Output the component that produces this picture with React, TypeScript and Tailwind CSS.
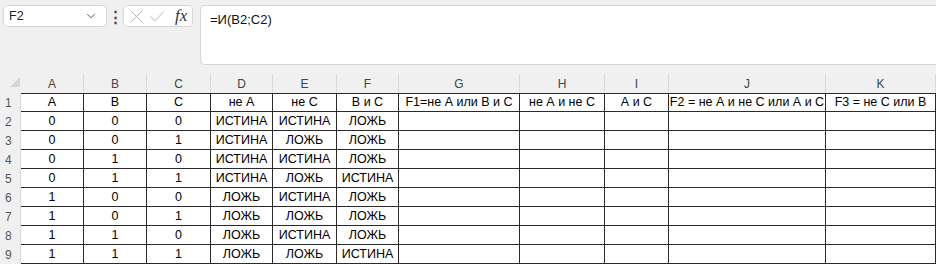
import { ChevronDown } from "lucide-react";

const cols = ["A", "B", "C", "D", "E", "F", "G", "H", "I", "J", "K"];

const head = ["A", "B", "C", "не А", "не С", "В и С", "F1=не А или В и С", "не А и не С", "А и С", "F2 = не А и не С или А и С", "F3 = не С или В"];

const rows = [
  ["0", "0", "0", "ИСТИНА", "ИСТИНА", "ЛОЖЬ"],
  ["0", "0", "1", "ИСТИНА", "ЛОЖЬ", "ЛОЖЬ"],
  ["0", "1", "0", "ИСТИНА", "ИСТИНА", "ЛОЖЬ"],
  ["0", "1", "1", "ИСТИНА", "ЛОЖЬ", "ИСТИНА"],
  ["1", "0", "0", "ЛОЖЬ", "ИСТИНА", "ЛОЖЬ"],
  ["1", "0", "1", "ЛОЖЬ", "ЛОЖЬ", "ЛОЖЬ"],
  ["1", "1", "0", "ЛОЖЬ", "ИСТИНА", "ЛОЖЬ"],
  ["1", "1", "1", "ЛОЖЬ", "ЛОЖЬ", "ИСТИНА"],
];

const grid =
  "grid grid-cols-[21px_63px_63px_64px_62px_64px_62px_121px_85px_64px_157px_1fr]";

const Cell = ({ text, first }: { text: string; first?: boolean }) => (
  <div
    className={`h-[19px] flex items-center justify-center whitespace-nowrap overflow-hidden border-r border-b border-[#2a2a2a] text-[12.5px] text-black ${
      first ? "border-t" : ""
    }`}
  >
    {text}
  </div>
);

const App = () => {
  return (
    <div className="w-[936px] h-[264px] overflow-hidden bg-[#f0f0f0] font-['Liberation_Sans',sans-serif]">
      {/* formula bar */}
      <div className="flex h-[74px] pt-[5px]">
        <div className="ml-[3px] w-[104px] h-[22px] flex items-center justify-between px-[5px] bg-white border border-[#d6d6d6] rounded-[4px]">
          <span className="text-[12.5px] text-[#222]">F2</span>
          <ChevronDown size={14} strokeWidth={1.6} className="text-[#555] mr-[3px]" />
        </div>
        <div className="w-[16px] h-[22px] flex items-center justify-center text-[#444] text-[15px] font-bold leading-none">
          ⋮
        </div>
        <div className="w-[70px] h-[22px] flex items-center pl-[6px] bg-white border border-[#d6d6d6] rounded-[4px]">
          <svg width="13" height="13" viewBox="0 0 13 13" className="text-[#b8b8b8]">
            <path d="M0.5 0.5L12.5 12.5M12.5 0.5L0.5 12.5" stroke="currentColor" strokeWidth="1" fill="none" />
          </svg>
          <svg width="14" height="11" viewBox="0 0 14 11" className="ml-[7px] text-[#b8b8b8]">
            <path d="M0.5 5.5L4.8 10L13.5 0.8" stroke="currentColor" strokeWidth="1" fill="none" />
          </svg>
          <span className="ml-[11px] font-['Liberation_Serif',serif] italic text-[17px] text-[#333]">
            fx
          </span>
        </div>
        <div className="ml-[7px] flex-1 h-[60px] bg-white border border-[#d6d6d6] border-r-0 rounded-l-[5px] pl-[9px] pt-[4px] text-[13px] text-[#111]">
          =И(B2;C2)
        </div>
      </div>

      {/* column headers */}
      <div className={`${grid} h-[19px]`}>
        <div className="relative">
          <div className="absolute left-[10px] top-[3px] w-0 h-0 border-l-[10px] border-l-transparent border-b-[10px] border-b-[#d6d6d6]" />
        </div>
        {cols.map((c) => (
          <div
            key={c}
            className="flex items-center justify-center border-r border-[#d9d9d9] text-[12px] text-[#444]"
          >
            {c}
          </div>
        ))}
      </div>

      {/* sheet */}
      <div className="bg-white">
        <div className={grid}>
          <div className="h-[19px] bg-[#f0f0f0] border-r border-[#d9d9d9] pl-[5px] flex items-center text-[12px] text-[#555]">
            1
          </div>
          {head.map((h, i) => (
            <Cell key={i} text={h} first />
          ))}
        </div>
        {rows.map((r, ri) => (
          <div key={ri} className={grid}>
            <div className="h-[19px] bg-[#f0f0f0] border-r border-[#d9d9d9] pl-[5px] flex items-center text-[12px] text-[#555]">
              {ri + 2}
            </div>
            {r.map((v, i) => (
              <Cell key={i} text={v} />
            ))}
            {[0, 1, 2, 3, 4].map((k) => (
              <Cell key={"e" + k} text="" />
            ))}
          </div>
        ))}
      </div>
    </div>
  );
};

export default App;
